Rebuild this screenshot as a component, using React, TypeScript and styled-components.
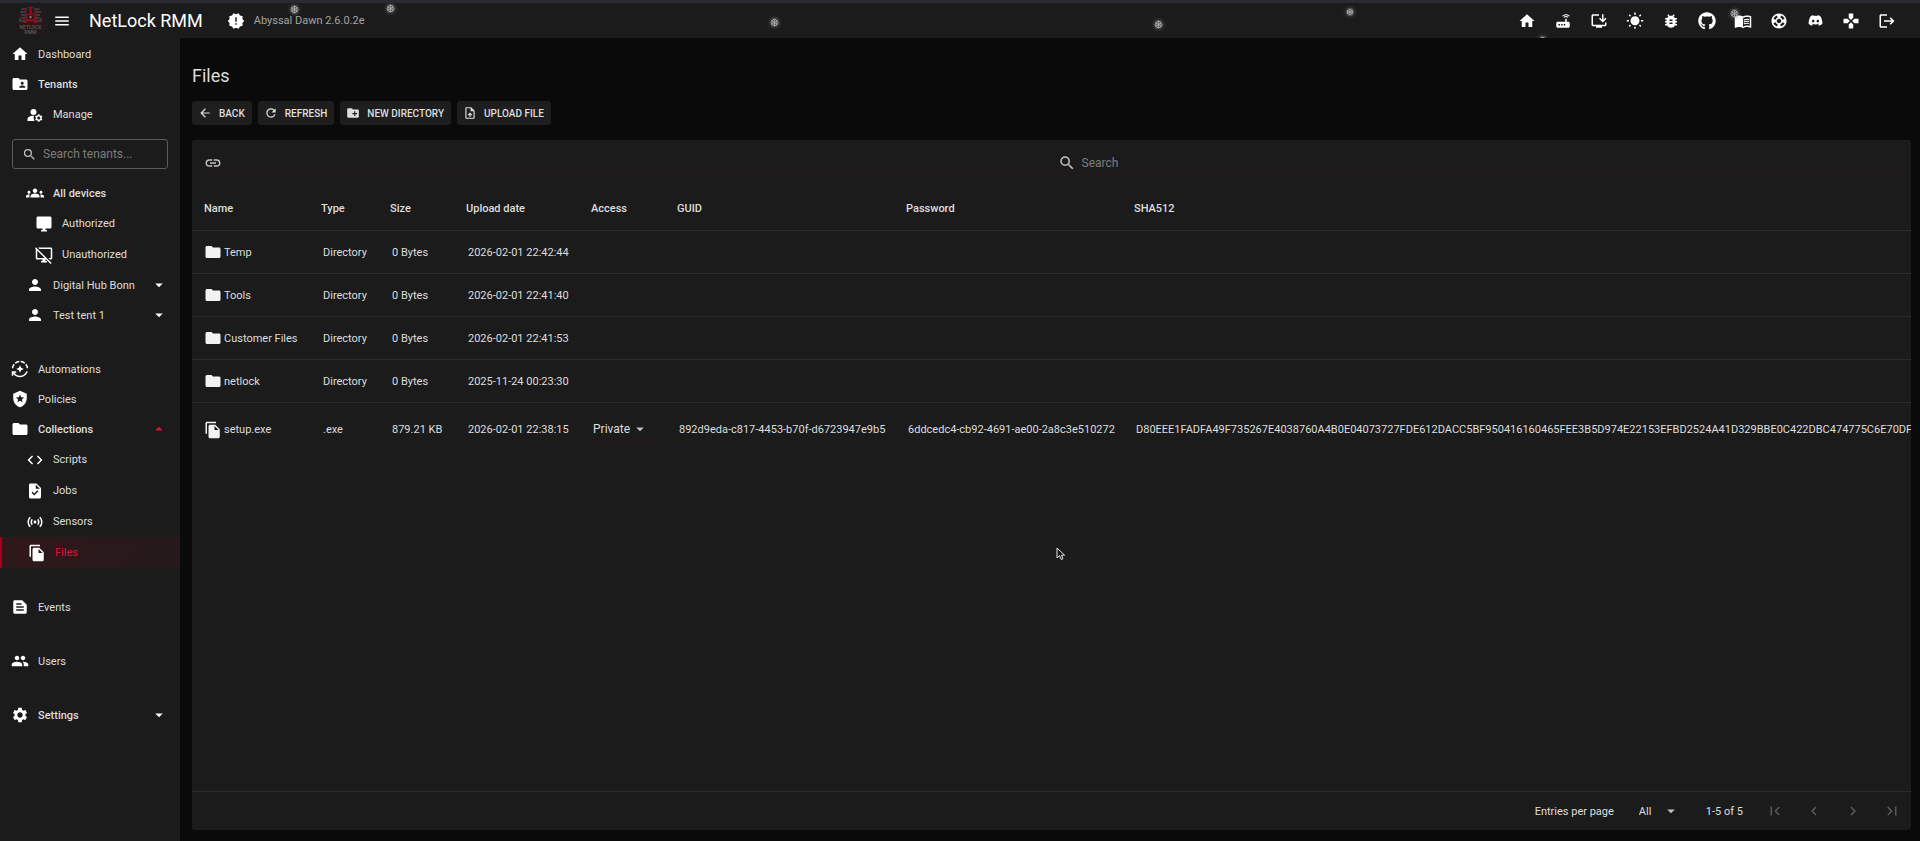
import React from "react";
import styled, { createGlobalStyle, css } from "styled-components";
import {
  MdArrowBack,
  MdArrowDropDown,
  MdArrowDropUp,
  MdAutoMode,
  MdBugReport,
  MdChevronLeft,
  MdChevronRight,
  MdCode,
  MdCreateNewFolder,
  MdDesktopAccessDisabled,
  MdFileCopy,
  MdFirstPage,
  MdFolder,
  MdFolderShared,
  MdGamepad,
  MdGroups,
  MdHome,
  MdInstallDesktop,
  MdLastPage,
  MdLink,
  MdLocalPolice,
  MdLogout,
  MdManageAccounts,
  MdMenu,
  MdMenuBook,
  MdNewReleases,
  MdPeople,
  MdPerson,
  MdRefresh,
  MdRouter,
  MdSearch,
  MdSensors,
  MdSettings,
  MdSupport,
  MdTask,
  MdTextSnippet,
  MdUploadFile,
  MdWbSunny,
} from "react-icons/md";
import { FaDiscord, FaGithub } from "react-icons/fa";

const GlobalStyle = createGlobalStyle`
  *, *::before, *::after { box-sizing: border-box; }
  body {
    margin: 0;
    background: #0a0a0a;
    color: #dedede;
    font: 400 11px/17px Roboto, "Liberation Sans", sans-serif;
  }
  button, input, select { font: inherit; color: inherit; }
  svg { display: block; flex: none; }
`;

const Page = styled.div`
  display: flex;
  flex-direction: column;
  min-height: 100vh;
`;

const TopBar = styled.header`
  position: relative;
  display: flex;
  align-items: center;
  height: 38px;
  padding: 0 15px 0 13px;
  background: #1b1b1b;
  border-top: 3px solid #2b2a33;
  overflow: hidden;
`;

const Logo = styled.svg`
  width: 36px;
  height: 34px;
  background: radial-gradient(closest-side, #30181a, #1b1b1b);
`;

const IconButton = styled.button<{ $size?: number; $dim?: boolean }>`
  display: grid;
  place-items: center;
  width: ${(p) => p.$size ?? 36}px;
  height: ${(p) => p.$size ?? 36}px;
  padding: 0;
  border: 0;
  background: none;
  color: ${(p) => (p.$dim ? "#5a5a5a" : "#fff")};
  font-size: 18px;
  cursor: pointer;
`;

const Brand = styled.h1`
  margin: 0 24px 0 14px;
  color: #fff;
  font-size: 18px;
  line-height: 24px;
  font-weight: 400;
`;

const Release = styled.div`
  display: flex;
  align-items: center;
  gap: 9px;
  color: #a4a4a4;

  svg {
    color: #fff;
    font-size: 18px;
  }
`;

const Actions = styled.div`
  display: flex;
  margin-left: auto;
`;

const Flake = styled.svg<{ $left: number; $top: number; $size: number }>`
  position: absolute;
  left: ${(p) => p.$left}%;
  top: ${(p) => p.$top}px;
  width: ${(p) => p.$size}px;
  height: ${(p) => p.$size}px;
  margin-left: 2px;
  color: #a8a8a8;
  pointer-events: none;
  filter: drop-shadow(0 0 2px #999);
`;

const Body = styled.div`
  display: flex;
  flex: 1;
`;

const Sidebar = styled.nav`
  display: flex;
  flex: none;
  flex-direction: column;
  gap: 24px;
  width: 180px;
  padding-top: 1px;
  background: #1b1b1b;
`;

const NavLink = styled.a<{ $level: number; $strong?: boolean; $active?: boolean }>`
  display: flex;
  align-items: center;
  gap: 9px;
  height: ${(p) => (p.$level < 2 ? 30 : 31)}px;
  padding: 0 12px 0 ${(p) => [11, 26, 35, 26][p.$level]}px;
  color: #dedede;
  font-weight: ${(p) => (p.$strong ? 500 : 400)};
  text-decoration: none;

  > svg {
    color: #fff;
    font-size: 18px;
  }

  ${(p) =>
    p.$active &&
    css`
      border-left: 2px solid #a80018;
      background: linear-gradient(135deg, #301719, #241a1b);
      color: #dc143c;
    `}
`;

const Caret = styled.span<{ $open?: boolean }>`
  margin-left: auto;
  color: ${(p) => (p.$open ? "#dc143c" : "#fff")};
  font-size: 18px;
`;

const TenantSearch = styled.label`
  display: flex;
  align-items: center;
  gap: 6px;
  height: 30px;
  margin: 9px 12px;
  padding: 0 9px;
  border: 1px solid #5a5a5a;
  border-radius: 3px;
  color: #c0c0c0;
  font-size: 15px;
`;

const TextInput = styled.input`
  flex: 1;
  min-width: 0;
  padding: 0;
  border: 0;
  outline: 0;
  background: none;
  font-size: 12px;
  line-height: 18px;

  &::placeholder {
    color: #7d7d7d;
    opacity: 1;
  }
`;

const Main = styled.main`
  display: flex;
  flex: 1;
  flex-direction: column;
  min-width: 0;
  padding: 26px 9px 11px 12px;
`;

const Title = styled.h2`
  margin: 0 0 13px;
  font-size: 18px;
  line-height: 24px;
  font-weight: 400;
`;

const ButtonRow = styled.div`
  display: flex;
  gap: 6px;
  margin-bottom: 15px;
`;

const ToolButton = styled.button`
  display: flex;
  align-items: center;
  gap: 7px;
  height: 24px;
  padding: 0 7px 0 6px;
  border: 0;
  border-radius: 3px;
  background: #1e1e1e;
  font-size: 10px;
  font-weight: 500;
  text-transform: uppercase;
  cursor: pointer;

  svg {
    font-size: 14px;
  }
`;

const Card = styled.section`
  display: flex;
  flex: 1;
  flex-direction: column;
  border-radius: 3px;
  background: #1b1b1b;
  overflow: hidden;
`;

const CardToolbar = styled.div`
  display: grid;
  grid-template-columns: 1fr 1fr;
  align-items: center;
  height: 36px;
  margin: 0 6px 11px 12px;
  padding-top: 11px;
  border-bottom: 1px solid #2a1719;

  button {
    color: #c4c4c4;
  }
`;

const FileSearch = styled.label`
  display: flex;
  align-items: center;
  gap: 6px;
  padding-left: 3px;
  color: #c4c4c4;
  font-size: 18px;
`;

const TableArea = styled.div`
  flex: 1;
  overflow: hidden;
`;

const FileTable = styled.table`
  width: 100%;
  table-layout: fixed;
  border-collapse: separate;
  border-spacing: 0;
  white-space: nowrap;
`;

const Col = styled.col<{ $width?: number }>`
  width: ${(p) => (p.$width ? `${p.$width}px` : "auto")};
`;

const HeadCell = styled.th`
  height: 44px;
  padding: 0 0 0 12px;
  border-bottom: 1px solid #2c2c2c;
  text-align: left;
  font-weight: 500;
`;

const Cell = styled.td<{ $last?: boolean }>`
  height: ${(p) => (p.$last ? 53 : 43)}px;
  padding: 0 0 0 14px;
  border-bottom: ${(p) => (p.$last ? "0" : "1px solid #2c2c2c")};
  overflow: hidden;
`;

const FileName = styled.span`
  display: flex;
  align-items: center;
  gap: 2px;
  margin-left: -2px;

  svg {
    color: #f2f2f2;
    font-size: 18px;
  }
`;

const SelectBox = styled.span<{ $underline?: boolean; $width: number }>`
  display: grid;
  grid-template-columns: 1fr 18px;
  align-items: center;
  width: ${(p) => p.$width}px;
  border-bottom: ${(p) => (p.$underline ? "1px solid #301518" : "0")};
  color: #c4c4c4;
  font-size: 18px;

  select {
    grid-area: 1 / 1 / 2 / 3;
    width: 100%;
    height: 24px;
    padding: 0;
    border: 0;
    outline: 0;
    appearance: none;
    background: none;
    color: #dedede;
    font-size: ${(p) => (p.$underline ? 12 : 11)}px;
  }

  svg {
    grid-area: 1 / 2;
    pointer-events: none;
  }
`;

const Footer = styled.footer`
  display: flex;
  align-items: center;
  justify-content: flex-end;
  height: 39px;
  padding-right: 1px;
  border-top: 1px solid #2c2c2c;
`;

const FooterLabel = styled.label`
  display: flex;
  align-items: center;
  gap: 25px;
`;

const PageRange = styled.span`
  margin: 0 14px 0 26px;
`;

const Pager = styled.div`
  display: flex;
  gap: 3px;
`;

const Pointer = styled.svg`
  position: fixed;
  left: 55%;
  top: 65%;
  width: 10px;
  height: 14px;
  pointer-events: none;
`;

const MonitorIcon = () => (
  <svg width="18" height="18" viewBox="0 0 24 24" fill="currentColor" aria-hidden="true">
    <path d="M20 2H4c-1.1 0-2 .9-2 2v12c0 1.1.9 2 2 2h6v2H8v2h8v-2h-2v-2h6c1.1 0 2-.9 2-2V4c0-1.1-.9-2-2-2z" />
  </svg>
);

const BrandMark = () => (
  <Logo viewBox="0 0 36 34" role="img" aria-label="NetLock RMM">
    <g fill="none" stroke="#655254" strokeWidth="1">
      <path d="M13 5H8.500M13 8H7M12 11H8M12 14H8.500M13 17H7V14" />
      <path d="M22 5H26.500M22 8H28M23 11H27M23 14H26.500M22 17H28V14" />
      <path d="M13 17V6q1-3 4.500-3T22 6v11" stroke="#5a2a2e" />
    </g>
    <path d="M17.500 3v7" stroke="#b00018" strokeWidth="2" />
    <ellipse cx="17.500" cy="13" rx="5" ry="3" fill="none" stroke="#960c1c" strokeWidth="1.500" />
    <circle cx="17.500" cy="13" r="1.200" fill="#887072" />
    <path d="M14 15l-4 4h4zM21 15l4 4h-4z" fill="#960c1c" />
    <path d="M14 17h7" stroke="#960c1c" />
    <text x="17.500" y="25" textAnchor="middle" fontSize="5" fontWeight="500" fill="#625658">
      NETLOCK
    </text>
    <text x="17.500" y="30" textAnchor="middle" fontSize="5" fontWeight="500" fill="#625658">
      RMM
    </text>
  </Logo>
);

const flakes = [
  { left: 15, top: 2, size: 9 },
  { left: 20, top: 1, size: 9 },
  { left: 40, top: 15, size: 9 },
  { left: 60, top: 17, size: 9 },
  { left: 70, top: 5, size: 8 },
  { left: 80, top: 33, size: 9 },
  { left: 90, top: 6, size: 9 },
];

const actions = [
  { label: "Home", icon: <MdHome /> },
  { label: "Relay", icon: <MdRouter /> },
  { label: "Download agent", icon: <MdInstallDesktop /> },
  { label: "Theme", icon: <MdWbSunny /> },
  { label: "Report a bug", icon: <MdBugReport /> },
  { label: "GitHub", icon: <FaGithub /> },
  { label: "Documentation", icon: <MdMenuBook /> },
  { label: "Support", icon: <MdSupport /> },
  { label: "Discord", icon: <FaDiscord size={15} /> },
  { label: "Games", icon: <MdGamepad /> },
  { label: "Log out", icon: <MdLogout /> },
];

const columns = [
  { name: "Name", width: 117 },
  { name: "Type", width: 69 },
  { name: "Size", width: 76 },
  { name: "Upload date", width: 125 },
  { name: "Access", width: 86 },
  { name: "GUID", width: 229 },
  { name: "Password", width: 228 },
  { name: "SHA512" },
];

const directories = [
  { name: "Temp", date: "2026-02-01 22:42:44" },
  { name: "Tools", date: "2026-02-01 22:41:40" },
  { name: "Customer Files", date: "2026-02-01 22:41:53" },
  { name: "netlock", date: "2025-11-24 00:23:30" },
];

type NavItemProps = {
  icon: React.ReactNode;
  label: string;
  level?: number;
  strong?: boolean;
  active?: boolean;
  caret?: "up" | "down";
};

const NavItem = ({ icon, label, level = 0, strong, active, caret }: NavItemProps) => (
  <NavLink href="#" $level={level} $strong={strong} $active={active} aria-current={active ? "page" : undefined}>
    {icon}
    {label}
    {caret && <Caret $open={caret === "up"}>{caret === "up" ? <MdArrowDropUp /> : <MdArrowDropDown />}</Caret>}
  </NavLink>
);

export default function App() {
  return (
    <Page>
      <GlobalStyle />
      <TopBar>
        <BrandMark />
        <IconButton $size={26} aria-label="Toggle menu">
          <MdMenu />
        </IconButton>
        <Brand>NetLock RMM</Brand>
        <Release>
          <MdNewReleases />
          Abyssal Dawn 2.6.0.2e
        </Release>
        <Actions>
          {actions.map((a) => (
            <IconButton key={a.label} aria-label={a.label}>
              {a.icon}
            </IconButton>
          ))}
        </Actions>
        {flakes.map((f) => (
          <Flake key={f.left} $left={f.left} $top={f.top} $size={f.size} viewBox="0 0 10 10" aria-hidden="true">
            <path
              d="M5 .5v9M1.200 2.800l7.600 4.400M1.200 7.200l7.600-4.400M3 .8l2 2 2-2M3 9.200l2-2 2 2M.8 4.800l2-.6-.2-2.200M9.200 4.800l-2-.6.2-2.200M.8 5.400l2 .6-.2 2.200M9.200 5.400l-2 .6.2 2.200"
              stroke="currentColor"
              strokeWidth="1"
              fill="none"
            />
          </Flake>
        ))}
      </TopBar>

      <Body>
        <Sidebar aria-label="Main">
          <div>
            <NavItem icon={<MdHome />} label="Dashboard" />
            <NavItem icon={<MdFolderShared />} label="Tenants" strong />
            <NavItem icon={<MdManageAccounts />} label="Manage" level={3} />
            <TenantSearch>
              <MdSearch />
              <TextInput type="text" placeholder="Search tenants..." aria-label="Search tenants" />
            </TenantSearch>
            <NavItem icon={<MdGroups />} label="All devices" level={1} strong />
            <NavItem icon={<MonitorIcon />} label="Authorized" level={2} />
            <NavItem icon={<MdDesktopAccessDisabled />} label="Unauthorized" level={2} />
            <NavItem icon={<MdPerson />} label="Digital Hub Bonn" level={1} caret="down" />
            <NavItem icon={<MdPerson />} label="Test tent 1" level={1} caret="down" />
          </div>
          <div>
            <NavItem icon={<MdAutoMode />} label="Automations" />
            <NavItem icon={<MdLocalPolice />} label="Policies" />
            <NavItem icon={<MdFolder />} label="Collections" strong caret="up" />
            <NavItem icon={<MdCode />} label="Scripts" level={3} />
            <NavItem icon={<MdTask />} label="Jobs" level={3} />
            <NavItem icon={<MdSensors />} label="Sensors" level={3} />
            <NavItem icon={<MdFileCopy />} label="Files" level={3} active />
          </div>
          <NavItem icon={<MdTextSnippet />} label="Events" />
          <NavItem icon={<MdPeople />} label="Users" />
          <NavItem icon={<MdSettings />} label="Settings" strong caret="down" />
        </Sidebar>

        <Main>
          <Title>Files</Title>
          <ButtonRow>
            <ToolButton>
              <MdArrowBack />
              Back
            </ToolButton>
            <ToolButton>
              <MdRefresh />
              Refresh
            </ToolButton>
            <ToolButton>
              <MdCreateNewFolder />
              New directory
            </ToolButton>
            <ToolButton>
              <MdUploadFile />
              Upload file
            </ToolButton>
          </ButtonRow>

          <Card>
            <CardToolbar>
              <IconButton $size={18} aria-label="Copy link">
                <MdLink />
              </IconButton>
              <FileSearch>
                <MdSearch />
                <TextInput type="text" placeholder="Search" aria-label="Search files" />
              </FileSearch>
            </CardToolbar>

            <TableArea>
              <FileTable>
                <colgroup>
                  {columns.map((c) => (
                    <Col key={c.name} $width={c.width} />
                  ))}
                </colgroup>
                <thead>
                  <tr>
                    {columns.map((c) => (
                      <HeadCell key={c.name} scope="col">
                        {c.name}
                      </HeadCell>
                    ))}
                  </tr>
                </thead>
                <tbody>
                  {directories.map((d) => (
                    <tr key={d.name}>
                      <Cell>
                        <FileName>
                          <MdFolder />
                          {d.name}
                        </FileName>
                      </Cell>
                      <Cell>Directory</Cell>
                      <Cell>0 Bytes</Cell>
                      <Cell>{d.date}</Cell>
                      <Cell />
                      <Cell />
                      <Cell />
                      <Cell />
                    </tr>
                  ))}
                  <tr>
                    <Cell $last>
                      <FileName>
                        <MdFileCopy />
                        setup.exe
                      </FileName>
                    </Cell>
                    <Cell $last>.exe</Cell>
                    <Cell $last>879.21 KB</Cell>
                    <Cell $last>2026-02-01 22:38:15</Cell>
                    <Cell $last>
                      <SelectBox $underline $width={56}>
                        <select aria-label="Access">
                          <option>Private</option>
                        </select>
                        <MdArrowDropDown />
                      </SelectBox>
                    </Cell>
                    <Cell $last>892d9eda-c817-4453-b70f-d6723947e9b5</Cell>
                    <Cell $last>6ddcedc4-cb92-4691-ae00-2a8c3e510272</Cell>
                    <Cell $last>
                      D80EEE1FADFA49F735267E4038760A4B0E04073727FDE612DACC5BF950416160465FEE3B5D974E22153EFBD2524A41D329BBE0C422DBC474775C6E70DFC9B
                    </Cell>
                  </tr>
                </tbody>
              </FileTable>
            </TableArea>

            <Footer>
              <FooterLabel>
                Entries per page
                <SelectBox $width={41}>
                  <select>
                    <option>All</option>
                  </select>
                  <MdArrowDropDown />
                </SelectBox>
              </FooterLabel>
              <PageRange>1-5 of 5</PageRange>
              <Pager>
                <IconButton $dim disabled aria-label="First page">
                  <MdFirstPage />
                </IconButton>
                <IconButton $dim disabled aria-label="Previous page">
                  <MdChevronLeft />
                </IconButton>
                <IconButton $dim disabled aria-label="Next page">
                  <MdChevronRight />
                </IconButton>
                <IconButton $dim disabled aria-label="Last page">
                  <MdLastPage />
                </IconButton>
              </Pager>
            </Footer>
          </Card>
        </Main>
      </Body>

      <Pointer viewBox="0 0 10 14" aria-hidden="true">
        <path d="M1 1v10l2.500-2.300L5.200 12.500l1.800-.8L5.400 8.200H8.600z" fill="#1b1b1b" stroke="#e6e6e6" strokeWidth="1" />
      </Pointer>
    </Page>
  );
}
